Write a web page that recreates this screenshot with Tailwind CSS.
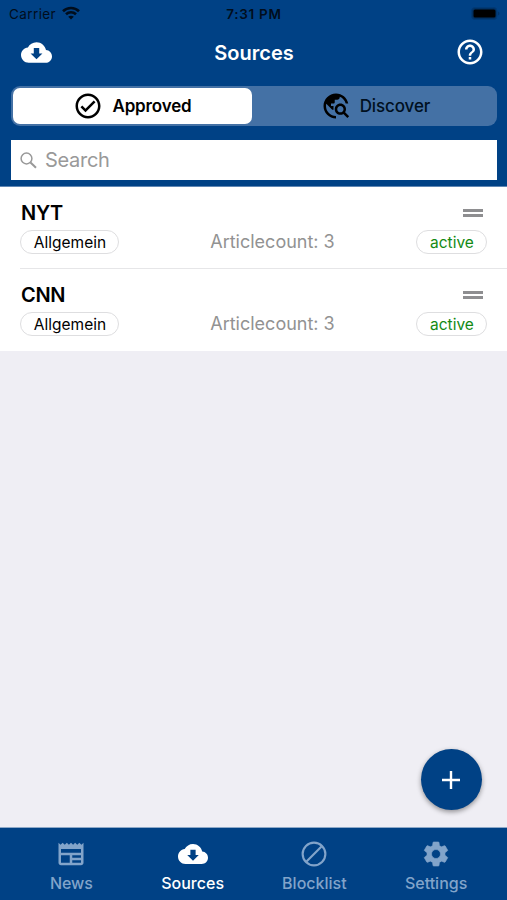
<!DOCTYPE html>
<html lang="en">
<head>
  <meta charset="UTF-8">
  <meta name="viewport" content="width=device-width, initial-scale=1.0">
  <title>Sources</title>
  <script src="https://cdn.jsdelivr.net/npm/@tailwindcss/browser@4"></script>
</head>
<body class="font-['Inter',sans-serif] bg-[#efeef4] text-black">
<div class="relative flex flex-col h-[900px] w-[507px] overflow-hidden">
  <header class="h-[187px] bg-[#004185] border-b border-[#5f86b3]">
    <!-- status bar -->
    <div class="grid grid-cols-3 items-center h-7 pl-[9px] pr-[7px] text-[13.5px] text-[#000d1c]">
      <div class="flex items-center gap-[6px]">
        <span class="tracking-[0.4px]">Carrier</span>
        <svg class="w-[18px] h-[14px] -mt-[2px]" viewBox="0 0 18 14" fill="none" stroke="#000d1c" stroke-width="2.6">
          <path d="M1 5.2C5.4.9 12.6.9 17 5.2M4 8.3c2.8-2.7 7.2-2.7 10 0"/>
          <path d="M9 13.6 6.2 10.8c1.6-1.5 4-1.5 5.6 0z" fill="#000d1c" stroke="none"/>
        </svg>
      </div>
      <span class="pr-px text-center font-semibold tracking-[0.7px]">7:31 PM</span>
      <svg class="justify-self-end w-[29px] h-[13px] -mt-[2px]" viewBox="0 0 29 13">
        <rect x=".5" y=".5" width="25.5" height="12" rx="3.5" fill="#003063" stroke="#003a76"/>
        <rect x="2.5" y="2.5" width="22" height="8" rx="1.5" fill="#000"/>
        <path d="M27.3 4.5v4c1.4-.6 1.4-3.4 0-4z" fill="#002f61"/>
      </svg>
    </div>
    <!-- title bar -->
    <div class="flex items-center justify-between h-12 pl-[21px] pr-[22px] text-white">
      <svg class="w-[31px] h-[31px]" viewBox="0 0 24 24" fill="currentColor"><path d="M19.35 10.04C18.67 6.59 15.64 4 12 4 9.11 4 6.6 5.64 5.35 8.04 2.34 8.36 0 10.91 0 14c0 3.31 2.69 6 6 6h13c2.76 0 5-2.24 5-5 0-2.64-2.05-4.78-4.65-4.96zM16.6 12.7 12 17.3l-4.6-4.6h2.5V8.6h4.2v4.1z"/></svg>
      <h1 class="pt-[2px] pl-px text-[20px] font-semibold">Sources</h1>
      <svg class="w-[30px] h-[30px]" viewBox="0 0 24 24" fill="currentColor"><path d="M11 18h2v-2h-2v2zm1-16C6.48 2 2 6.48 2 12s4.48 10 10 10 10-4.48 10-10S17.52 2 12 2zm0 18c-4.41 0-8-3.59-8-8s3.59-8 8-8 8 3.59 8 8-3.59 8-8 8zm0-14c-2.21 0-4 1.79-4 4h2c0-1.1.9-2 2-2s2 .9 2 2c0 2-3 1.75-3 5h2c0-2.25 3-2.5 3-5 0-2.21-1.79-4-4-4z"/></svg>
    </div>
    <!-- segmented control -->
    <div class="flex ml-[11px] mr-[10px] mt-[10px] h-10 p-[2px] rounded-[9px] bg-[#4471a5] text-[17px]">
      <div class="flex items-center justify-center gap-[9px] w-[239px] rounded-[7px] bg-white">
        <svg class="w-[30px] h-[30px]" viewBox="0 0 24 24" fill="currentColor"><path d="M12 2C6.48 2 2 6.48 2 12s4.48 10 10 10 10-4.48 10-10S17.52 2 12 2zm0 18c-4.41 0-8-3.59-8-8s3.59-8 8-8 8 3.59 8 8-3.59 8-8 8zm4.59-12.42L10 14.17l-2.59-2.58L6 13l4 4 8-8z"/></svg>
        <span class="pt-[2px] font-semibold tracking-[-0.15px]">Approved</span>
      </div>
      <div class="flex flex-1 items-center justify-center gap-[9px] pl-1 text-[#00101f]">
        <svg class="w-[30px] h-[30px]" viewBox="0 0 24 24" fill="#000"><path d="M19.3 16.9c.4-.7.7-1.5.7-2.4 0-2.5-2-4.5-4.5-4.5S11 12 11 14.5s2 4.5 4.5 4.5c.9 0 1.7-.3 2.4-.7l3.2 3.2 1.4-1.4-3.2-3.2zm-3.8.1c-1.4 0-2.5-1.1-2.5-2.5s1.1-2.5 2.5-2.5 2.5 1.1 2.5 2.5-1.1 2.5-2.5 2.5zM12 20v2C6.48 22 2 17.52 2 12S6.48 2 12 2c4.84 0 8.87 3.44 9.8 8h-2.07c-.64-2.46-2.4-4.47-4.73-5.41V5c0 1.1-.9 2-2 2h-2v2c0 .55-.45 1-1 1H8v2h2v3H9l-4.79-4.79C4.08 10.79 4 11.38 4 12c0 4.41 3.59 8 8 8z"/></svg>
        <span class="pt-[2px] font-medium tracking-[-0.1px]">Discover</span>
      </div>
    </div>
    <!-- search -->
    <div class="flex items-center gap-2 ml-[11px] mr-[10px] mt-[14px] h-10 pl-[9px] bg-white text-[20px] text-[#999]">
      <svg class="w-[17px] h-[17px] mt-px" viewBox="0 0 17 17" fill="none" stroke="#999"><circle cx="6.5" cy="6.5" r="5.4" stroke-width="1.5"/><path d="m10.5 10.5 5.5 5.3" stroke-width="2"/></svg>
      <span class="tracking-[-0.3px]">Search</span>
    </div>
  </header>

  <main class="flex-1">
    <ul class="bg-white">
      <li class="h-[82px] pl-5">
        <div class="flex flex-col h-full pr-5 border-b border-[#e6e6e8]">
          <div class="flex items-center justify-between h-[27px] mt-3 pl-px pr-1">
            <h2 class="text-[20px] font-semibold tracking-[-0.3px]">NYT</h2>
            <span class="w-5 h-2 border-y-[3px] border-[#8e8e90]"></span>
          </div>
          <div class="flex items-center justify-between h-[24px] mt-[4px] text-[15.5px]">
            <span class="flex items-center justify-center w-[99px] h-6 pt-px pl-px rounded-full border border-[#dedee0]">Allgemein</span>
            <span class="text-[18px] text-[#929292] ml-[10px] -mt-[2px]">Articlecount: 3</span>
            <span class="flex items-center justify-center w-[71px] h-6 pt-px pl-px rounded-full border border-[#dedee0] text-[#138a13]">active</span>
          </div>
        </div>
      </li>
      <li class="h-[82px] pl-5">
        <div class="flex flex-col h-full pr-5">
          <div class="flex items-center justify-between h-[27px] mt-3 pl-px pr-1">
            <h2 class="text-[20px] font-semibold tracking-[-0.3px]">CNN</h2>
            <span class="w-5 h-2 border-y-[3px] border-[#8e8e90]"></span>
          </div>
          <div class="flex items-center justify-between h-[24px] mt-[4px] text-[15.5px]">
            <span class="flex items-center justify-center w-[99px] h-6 pt-px pl-px rounded-full border border-[#dedee0]">Allgemein</span>
            <span class="text-[18px] text-[#929292] ml-[10px] -mt-[2px]">Articlecount: 3</span>
            <span class="flex items-center justify-center w-[71px] h-6 pt-px pl-px rounded-full border border-[#dedee0] text-[#138a13]">active</span>
          </div>
        </div>
      </li>
    </ul>
  </main>

  <button class="absolute right-[25.5px] bottom-[90px] flex items-center justify-center w-[61px] h-[61px] rounded-full bg-[#004185] shadow-[0_2px_5px_rgba(0,0,0,0.4)]">
    <svg class="w-[18px] h-[18px]" viewBox="0 0 18 18" stroke="#fff" stroke-width="2.4"><path d="M9 0v18M0 9h18"/></svg>
  </button>

  <nav class="grid grid-cols-4 h-[73px] px-[10px] pt-[11px] bg-[#004185] border-t border-[#8ea9c8] text-[16px] font-medium text-[#82a4ca]">
    <a class="flex flex-col items-center gap-[2px]">
      <svg class="w-[30px] h-[30px]" viewBox="0 0 24 24" fill="currentColor"><path d="m22 3-1.67 1.67L18.67 3 17 4.67 15.33 3l-1.66 1.67L12 3l-1.67 1.67L8.67 3 7 4.67 5.33 3 3.67 4.67 2 3v16c0 1.1.9 2 2 2h16c1.1 0 2-.9 2-2V3zM11 19H4v-6h7v6zm9 0h-7v-2h7v2zm0-4h-7v-2h7v2zm0-4H4V8h16v3z"/></svg>
      <span class="pl-px tracking-[-0.1px]">News</span>
    </a>
    <a class="flex flex-col items-center gap-[2px] text-white">
      <svg class="w-[30px] h-[30px]" viewBox="0 0 24 24" fill="currentColor"><path d="M19.35 10.04C18.67 6.59 15.64 4 12 4 9.11 4 6.6 5.64 5.35 8.04 2.34 8.36 0 10.91 0 14c0 3.31 2.69 6 6 6h13c2.76 0 5-2.24 5-5 0-2.64-2.05-4.78-4.65-4.96zM16.6 12.7 12 17.3l-4.6-4.6h2.5V8.6h4.2v4.1z"/></svg>
      <span>Sources</span>
    </a>
    <a class="flex flex-col items-center gap-[2px]">
      <svg class="w-[30px] h-[30px]" viewBox="0 0 24 24" fill="none" stroke="currentColor" stroke-width="1.7"><circle cx="12" cy="12" r="9.1"/><path d="M5.8 18.2 18.2 5.8"/></svg>
      <span>Blocklist</span>
    </a>
    <a class="flex flex-col items-center gap-[2px]">
      <svg class="w-[30px] h-[30px]" viewBox="0 0 24 24" fill="currentColor" stroke="currentColor" stroke-width=".5"><path d="M19.14 12.94c.04-.3.06-.61.06-.94 0-.32-.02-.64-.07-.94l2.03-1.58c.18-.14.23-.41.12-.61l-1.92-3.32c-.12-.22-.37-.29-.59-.22l-2.39.96c-.5-.38-1.03-.7-1.62-.94l-.36-2.54c-.04-.24-.24-.41-.48-.41h-3.84c-.24 0-.43.17-.47.41l-.36 2.54c-.59.24-1.13.57-1.62.94l-2.39-.96c-.22-.08-.47 0-.59.22L2.74 8.87c-.12.21-.08.47.12.61l2.03 1.58c-.05.3-.09.63-.09.94s.02.64.07.94l-2.03 1.58c-.18.14-.23.41-.12.61l1.92 3.32c.12.22.37.29.59.22l2.39-.96c.5.38 1.03.7 1.62.94l.36 2.54c.05.24.24.41.48.41h3.84c.24 0 .44-.17.47-.41l.36-2.54c.59-.24 1.13-.56 1.62-.94l2.39.96c.22.08.47 0 .59-.22l1.92-3.32c.12-.22.07-.47-.12-.61l-2.01-1.58zM12 15.6c-1.98 0-3.6-1.62-3.6-3.6s1.62-3.6 3.6-3.6 3.6 1.62 3.6 3.6-1.62 3.6-3.6 3.6z"/></svg>
      <span>Settings</span>
    </a>
  </nav>
</div>
</body>
</html>
